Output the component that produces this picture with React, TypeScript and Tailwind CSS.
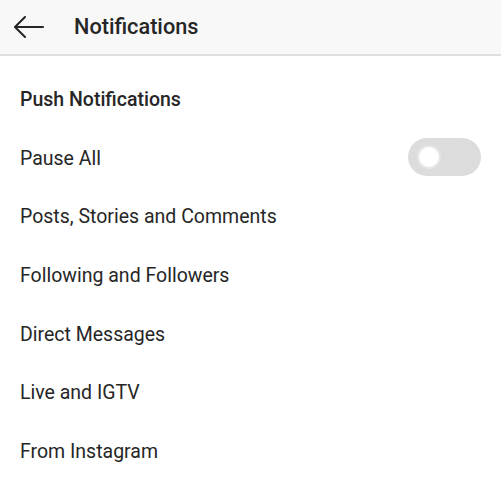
import React, { useState } from 'react';

const items = [
  'Posts, Stories and Comments',
  'Following and Followers',
  'Direct Messages',
  'Live and IGTV',
  'From Instagram'
];

const App = () => {
  const [paused, setPaused] = useState(false);

  return (
    <div className="w-[501px] h-[482px] bg-white text-[#262626] overflow-hidden" style={{ fontFamily: 'Roboto, "Noto Sans", sans-serif' }}>
      <header className="h-[56px] bg-[#f8f8f8] border-b-2 border-[#dedede] flex items-center">
        <button className="ml-[14px] w-[30px] h-[22px] flex items-center justify-center">
          <svg width="30" height="22" viewBox="0 0 30 22" fill="none" stroke="#262626" strokeWidth="2" strokeLinecap="round" strokeLinejoin="round">
            <path d="M11 1 L1 11 L11 21" />
            <path d="M1.5 11 H29" />
          </svg>
        </button>
        <h1 className="ml-[30px] text-[21.7px] font-medium leading-none">Notifications</h1>
      </header>

      <div className="px-[20px]">
        <h2 className="mt-[33px] text-[19.5px] font-medium leading-[22px]">Push Notifications</h2>

        <div className="mt-[27px] flex items-center justify-between h-[38px]">
          <span className="pt-[3px] text-[19.5px] leading-none">Pause All</span>
          <button
            onClick={() => setPaused(!paused)}
            className="w-[73px] h-[38px] rounded-full bg-[#dcdcdc] flex items-center px-[9px]"
          >
            <span className="w-[24px] h-[24px] rounded-full bg-white border-[2px] border-[#e6e6e6]" />
          </button>
        </div>

        {items.map((label) => (
          <div key={label} className="mt-[20.6px] h-[38px] pt-[3px] flex items-center text-[19.5px] leading-none">
            {label}
          </div>
        ))}
      </div>
    </div>
  );
};

export default App;
